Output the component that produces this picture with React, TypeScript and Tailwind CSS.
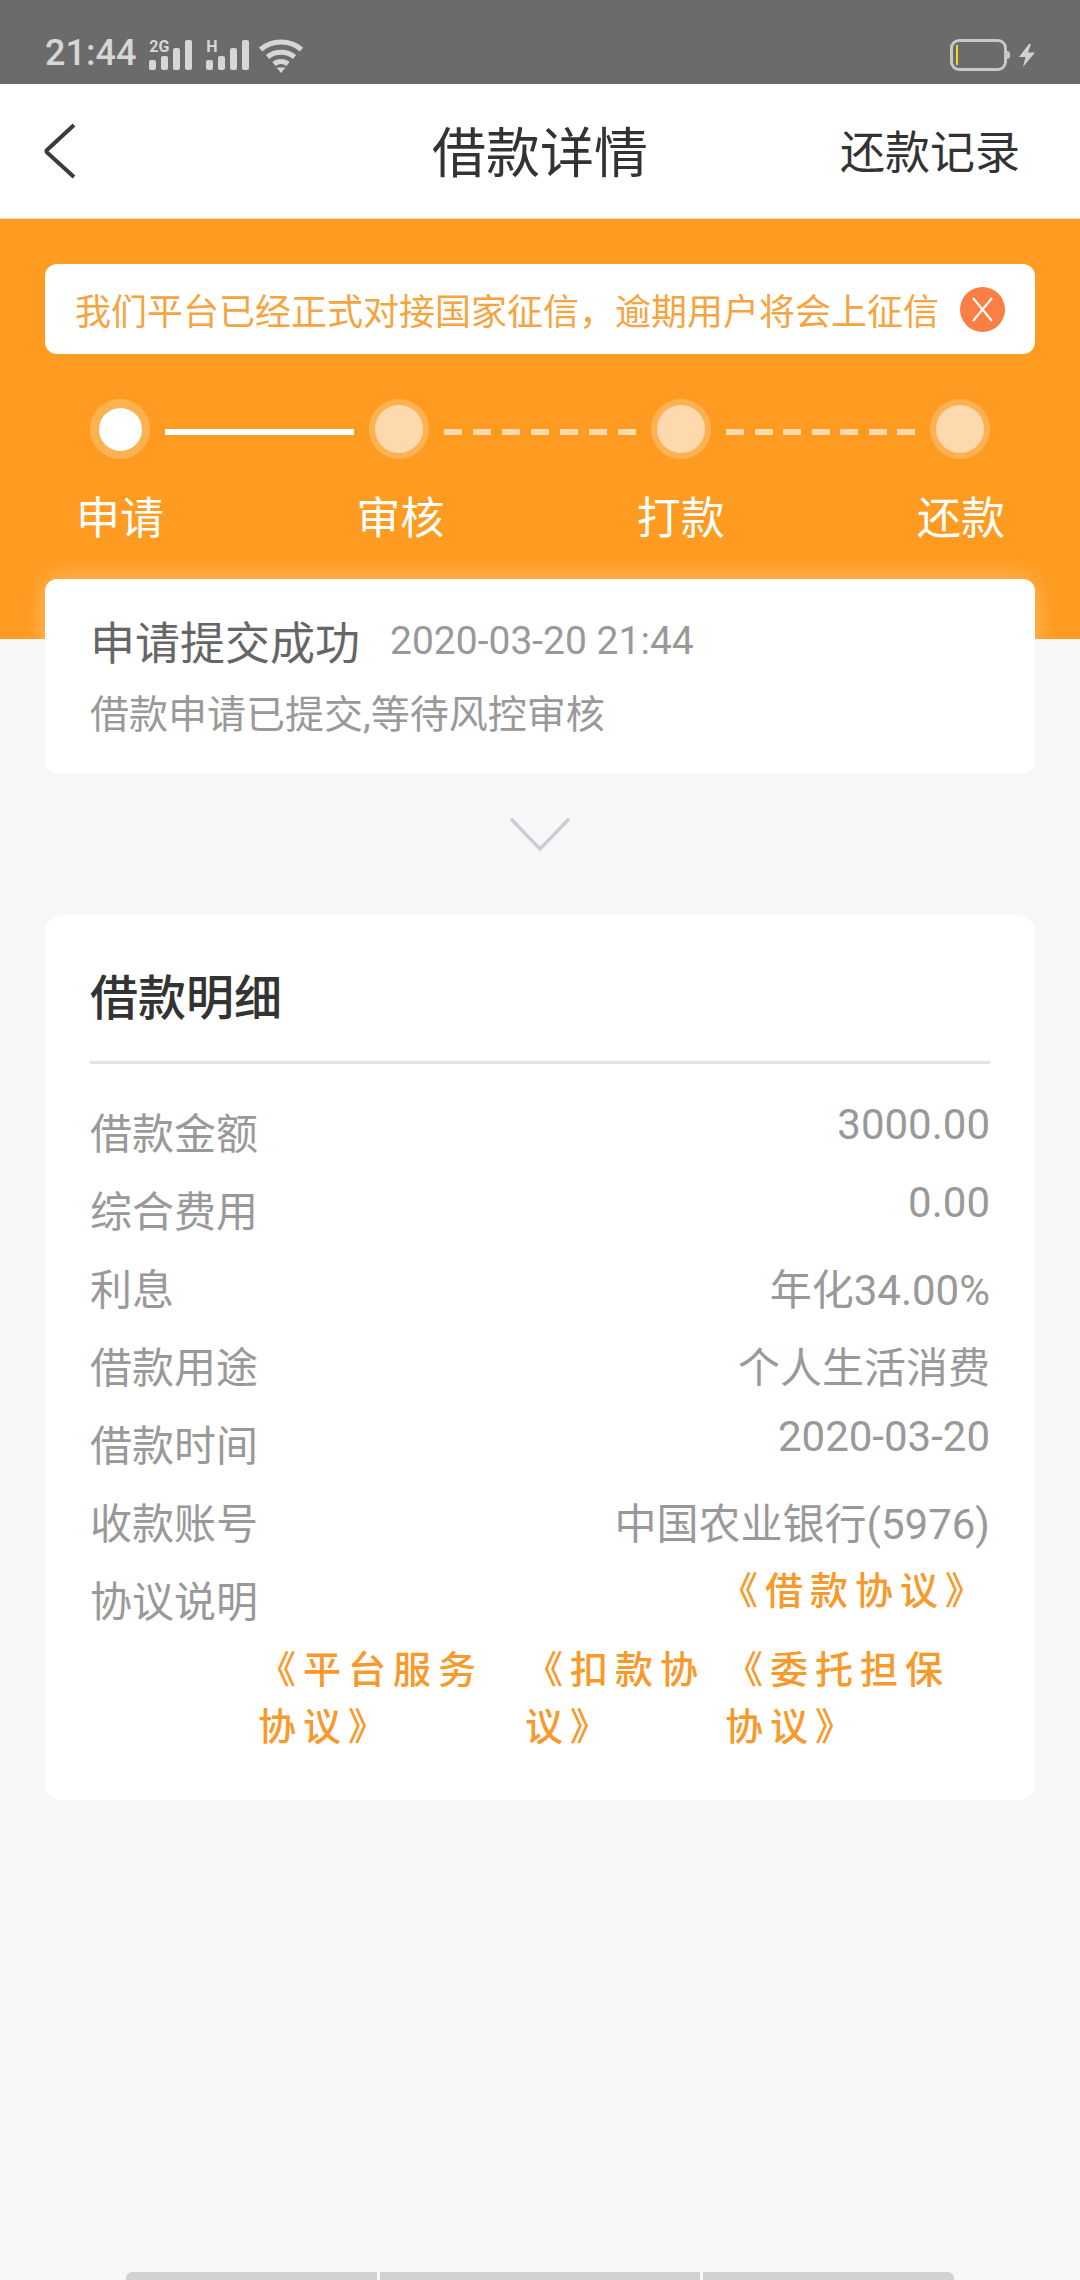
import React from "react";

function Bars() {
  return (
    <svg width="46" height="30" viewBox="0 0 46 30" className="block">
      <rect x="0" y="20" width="7" height="10" rx="2" fill="#d6d6d6" />
      <rect x="12" y="16" width="7" height="14" rx="2" fill="#d6d6d6" />
      <rect x="24" y="8" width="7" height="22" rx="2" fill="#d6d6d6" />
      <rect x="36" y="0" width="7" height="30" rx="2" fill="#d6d6d6" />
    </svg>
  );
}

function Wifi() {
  return (
    <svg width="44" height="34" viewBox="0 0 44 34" className="block">
      <path d="M1.5 10.5 C13 0.5 31 0.5 42.5 10.5" fill="none" stroke="#d6d6d6" strokeWidth="5" />
      <path d="M8.5 18 C16 11.5 28 11.5 35.5 18" fill="none" stroke="#d6d6d6" strokeWidth="5" />
      <path d="M15 25 C19 21.5 25 21.5 29 25" fill="none" stroke="#d6d6d6" strokeWidth="5" />
      <path d="M17.5 28.5 H26.5 L22 34 Z" fill="#d6d6d6" />
    </svg>
  );
}

function StatusBar() {
  return (
    <div className="h-[84px] bg-[#6b6b6b] flex items-end justify-between pb-[14px] pl-[45px] pr-[45px]">
      <div className="flex items-end">
        <span className="text-[36px] leading-[36px] font-medium text-[#d6d6d6] mr-[13px] -mb-[1px]">21:44</span>
        <div className="relative mr-[11px]">
          <span className="absolute left-0 -top-[1px] text-[16px] leading-[16px] font-bold text-[#d6d6d6]">2G</span>
          <Bars />
        </div>
        <div className="relative mr-[7px]">
          <span className="absolute left-0 -top-[1px] text-[16px] leading-[16px] font-bold text-[#d6d6d6]">H</span>
          <Bars />
        </div>
        <div className="-mb-[3px]"><Wifi /></div>
      </div>
      <div className="flex items-center -mb-[1px]">
        <div className="w-[57px] h-[32px] border-[3px] border-[#c8c8c8] rounded-[9px] relative flex items-center pl-[3px]">
          <div className="w-[2px] h-[20px] bg-[#f7d518]" />
          <div className="absolute -right-[6px] top-[9px] w-[3px] h-[8px] bg-[#c8c8c8] rounded-r-full" />
        </div>
        <svg width="16" height="23" viewBox="0 0 16 23" className="ml-[12px]">
          <path d="M10 0 L0 13 H6.5 L4 23 L16 8.5 H9 L12 0 Z" fill="#d2d2d2" />
        </svg>
      </div>
    </div>
  );
}

function Header() {
  return (
    <div className="h-[134px] bg-white flex items-center relative">
      <svg width="34" height="56" viewBox="0 0 34 56" className="ml-[43px]">
        <path d="M31 2 L4 27 Q3 28 4 29.5 L31 54" fill="none" stroke="#3a3a3a" strokeWidth="4" />
      </svg>
      <div className="absolute left-0 right-0 text-center text-[54px] text-[#333333] leading-[normal] -mt-[3px]">借款详情</div>
      <div className="absolute right-[60px] text-[45px] text-[#333333] leading-[normal] -mt-[3px]">还款记录</div>
    </div>
  );
}

function Dot({ active }: { active?: boolean }) {
  return (
    <div className="w-[60px] h-[60px] rounded-full bg-[#fdb251] flex items-center justify-center">
      <div className={active ? "w-[43px] h-[43px] rounded-full bg-white" : "w-[48px] h-[48px] rounded-full bg-[#fdd9ad]"} />
    </div>
  );
}

function Dashes({ wide }: { wide?: boolean }) {
  return (
    <div className={wide ? "flex justify-between w-[192px] mt-[6px]" : "flex justify-between w-[189px] mt-[6px]"}>
      {[0, 1, 2, 3, 4, 5, 6].map((i) => (
        <div key={i} className="w-[18px] h-[6px] bg-[#fdd9ad]" />
      ))}
    </div>
  );
}

function Hero() {
  return (
    <div className="h-[421px] bg-[#fe9b20] border-t-[1px] border-[#f9dfb8] pt-[45px] px-[45px]">
      <div className="h-[90px] bg-white rounded-[12px] flex items-center pl-[30px]">
        <span className="text-[36px] leading-[normal] text-[#f6a43f] whitespace-nowrap">我们平台已经正式对接国家征信，逾期用户将会上征信</span>
        <div className="ml-[21px] w-[45px] h-[45px] rounded-full bg-[#fa7f45] flex items-center justify-center">
          <svg width="23" height="27" viewBox="0 0 23 27">
            <path d="M2 2 L21 25 M21 2 L2 25" stroke="#ffffff" strokeWidth="2" />
          </svg>
        </div>
      </div>
      <div className="flex items-center gap-[15px] mt-[45px] ml-[45px]">
        <Dot active />
        <div className="w-[189px] h-[6px] bg-white mt-[6px]" />
        <Dot />
        <Dashes wide />
        <Dot />
        <Dashes />
        <Dot />
      </div>
      <div className="flex justify-between mt-[24px] ml-[31px] mr-[30px] text-[44px] leading-[normal] text-white">
        <span>申请</span>
        <span>审核</span>
        <span>打款</span>
        <span>还款</span>
      </div>
    </div>
  );
}

function StatusCard() {
  return (
    <div className="mx-[45px] -mt-[60px] h-[194px] bg-white rounded-[12px] pl-[45px] pt-[29px] relative shadow-[0_0_24px_rgba(255,255,255,0.35)]">
      <div className="flex items-center leading-[normal]">
        <span className="text-[45px] text-[#666666]">申请提交成功</span>
        <span className="text-[39px] text-[#999999] ml-[30px]">2020-03-20 21:44</span>
      </div>
      <div className="text-[39px] leading-[normal] text-[#999999] mt-[10px]">借款申请已提交,等待风控审核</div>
    </div>
  );
}

function Row({ label, value }: { label: string; value: string }) {
  return (
    <div className="flex items-start justify-between h-[78px] leading-[normal] text-[42px] text-[#999999]">
      <span>{label}</span>
      <span>{value}</span>
    </div>
  );
}

const linkClass = "text-[38px] leading-[57px] tracking-[7px] font-medium text-[#f79a2b]";

function DetailCard() {
  return (
    <div className="mx-[45px] mt-[98px] h-[885px] bg-white rounded-[16px] px-[45px]">
      <div className="h-[149px] border-b-[3px] border-[#e4e4e4] pt-[44px]">
        <div className="text-[48px] leading-[normal] font-medium text-[#333333]">借款明细</div>
      </div>
      <div className="pt-[36px]">
        <Row label="借款金额" value="3000.00" />
        <Row label="综合费用" value="0.00" />
        <Row label="利息" value="年化34.00%" />
        <Row label="借款用途" value="个人生活消费" />
        <Row label="借款时间" value="2020-03-20" />
        <Row label="收款账号" value="中国农业银行(5976)" />
        <div className="flex items-start justify-between text-[42px] text-[#999999] leading-[normal]">
          <span>协议说明</span>
          <span className={linkClass + " -mt-[5px]"}>《借款协议》</span>
        </div>
        <div className={"flex justify-end mt-[13px] mr-[2px] " + linkClass}>
          <div className="w-[267px]">《平台服务协议》</div>
          <div className="w-[200px]">《扣款协议》</div>
          <div className="w-[263px]">《委托担保协议》</div>
        </div>
      </div>
    </div>
  );
}

export default function App() {
  return (
    <div className="w-[1080px] h-[2280px] bg-[#f7f7f7] relative overflow-hidden font-['Roboto','Noto_Sans_CJK_SC',sans-serif]">
      <StatusBar />
      <Header />
      <Hero />
      <StatusCard />
      <div className="flex justify-center mt-[44px] h-0">
        <svg width="62" height="36" viewBox="0 0 62 36" className="shrink-0">
          <path d="M2 2 L31 32 L60 2" fill="none" stroke="#c9ced6" strokeWidth="3.5" />
        </svg>
      </div>
      <DetailCard />
      <div className="absolute bottom-0 left-[126px] flex gap-[3px] h-[8px]">
        <div className="w-[251px] bg-[#d2d2d2] rounded-tl-[6px]" />
        <div className="w-[320px] bg-[#d2d2d2]" />
        <div className="w-[251px] bg-[#d2d2d2] rounded-tr-[6px]" />
      </div>
    </div>
  );
}
